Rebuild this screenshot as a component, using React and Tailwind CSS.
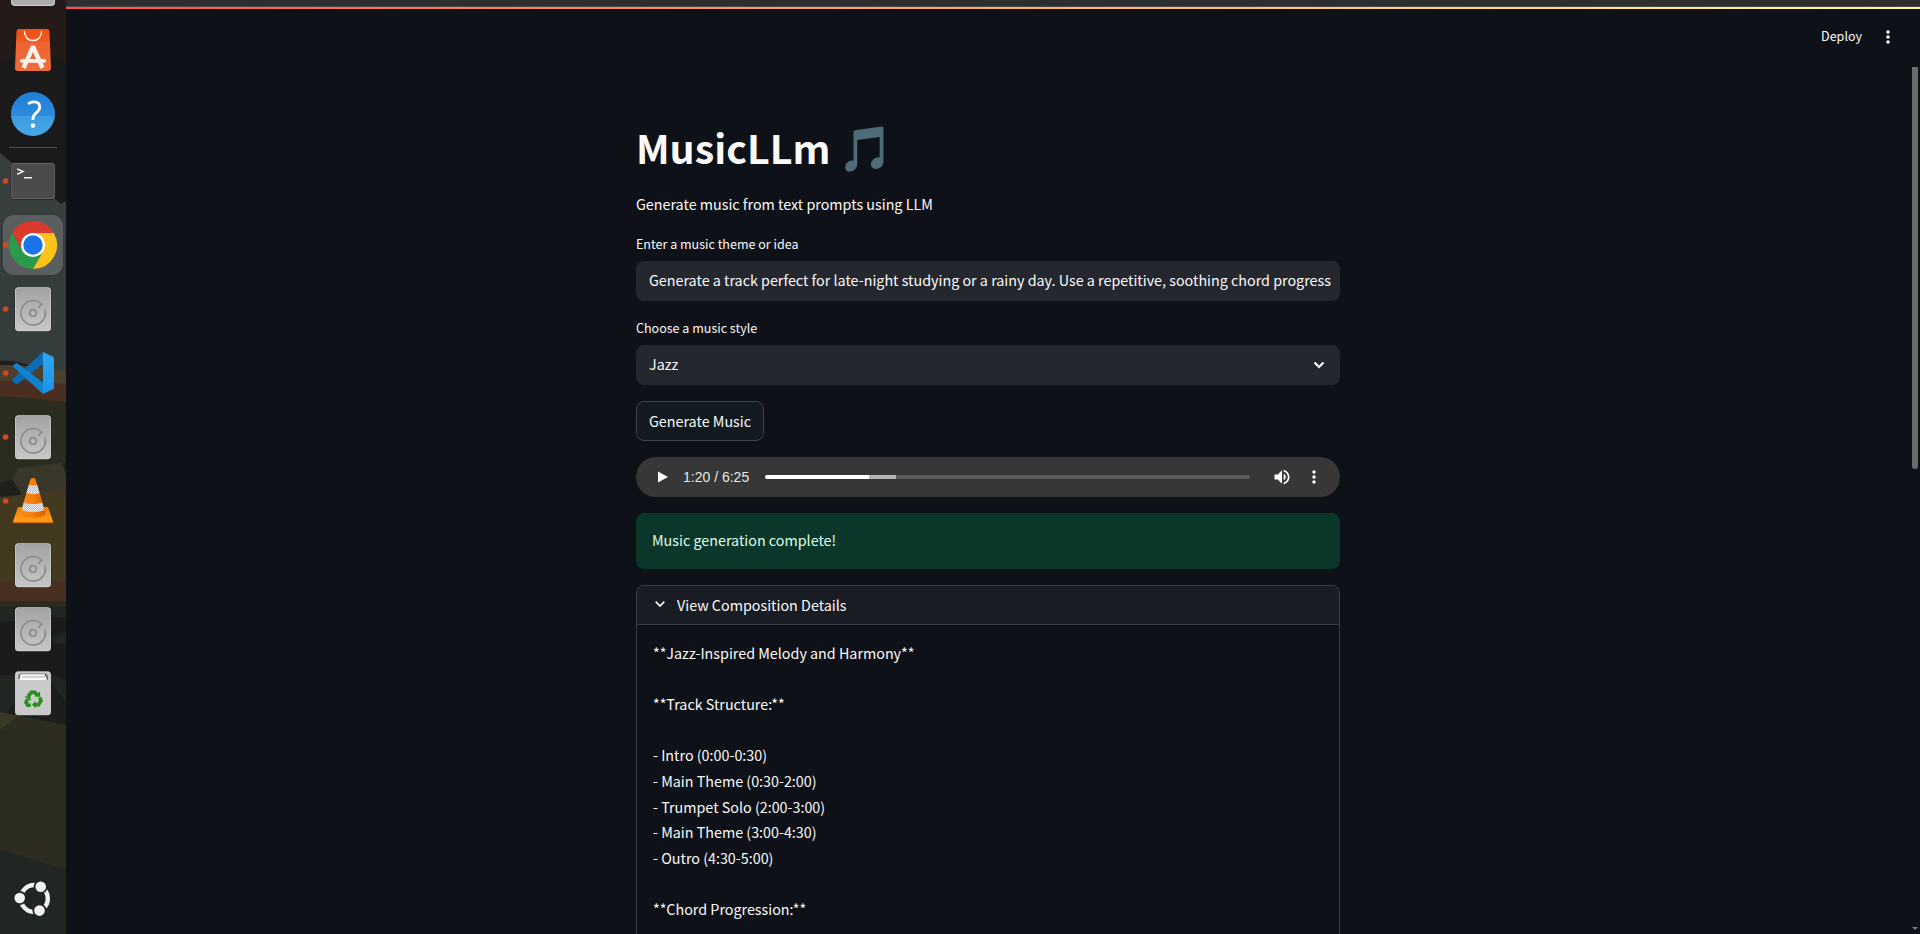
import React from "react";

function Slot({ running, children }) {
  return (
    <svg className="block h-16 w-[66px] shrink-0" viewBox="0 0 66 64" fill="none">
      {children}
      {running && <circle cx="5.6" cy="32" r="2.8" fill="#d9481c" />}
    </svg>
  );
}

function Disk({ running }) {
  return (
    <Slot running={running}>
      <rect x="14.6" y="10.6" width="36.8" height="44.4" rx="4" fill="#161616" opacity=".6" />
      <rect x="15" y="10.3" width="36" height="44" rx="3.6" fill="#d2d2d2" />
      <rect x="15.6" y="11" width="34.8" height="42.2" rx="3" fill="url(#disk)" />
      <path d="M40.6 26.2A12.2 12.2 0 1 0 44.9 32.6" stroke="#868686" strokeWidth="1.5" />
      <path d="M38.3 30.8l3.2-3.4M40.9 26.4l1.6 1.3" stroke="#868686" strokeWidth="1.5" />
      <circle cx="33" cy="36" r="3.3" stroke="#868686" strokeWidth="1.6" />
    </Slot>
  );
}

function Wallpaper() {
  return (
    <svg className="absolute inset-0 h-full w-full" viewBox="0 0 66 934" preserveAspectRatio="none">
      <rect width="66" height="934" fill="#1a1a1b" />
      <path d="M0 0H66V64Q33 38 0 64Z" fill="#241a18" />
      <path d="M0 153L61 204L66 201V380H0Z" fill="#383f3f" />
      <path d="M0 218L66 240V380H0Z" fill="#353c3c" />
      <path d="M0 361Q18 360 30 366L66 374V392H0Z" fill="#1e1d1b" />
      <path d="M0 365Q20 364 66 371V392H0Z" fill="#4a402d" />
      <path d="M0 381Q30 378 66 385V402H0Z" fill="#4a2e20" />
      <path d="M0 396Q30 398 66 402V470L0 484Z" fill="#2a2c20" />
      <path d="M0 483L66 463V500H0Z" fill="#1c1f1c" />
      <path d="M12 479L18 468L62 463L66 474V495H22Z" fill="#38372a" />
      <path d="M0 497Q30 494 66 489V584H0Z" fill="#433920" />
      <path d="M0 581H66V602H0Z" fill="#472f22" />
      <path d="M0 601H66V607H0Z" fill="#32291f" />
      <path d="M0 606H66V690H0Z" fill="#202622" />
      <path d="M0 622L66 617V632L48 640L66 645V682L0 675Z" fill="#1b1b1d" />
      <path d="M0 680Q30 662 66 681V740H0Z" fill="#202622" />
      <path d="M6 713L22 695L48 678L66 702V728Z" fill="#1b1e1c" />
      <path d="M0 712L66 725V871L0 850Z" fill="#2c2c20" />
      <path d="M0 712L18 716L0 730Z" fill="#3a3826" />
      <path d="M0 849L66 870V934H0Z" fill="#202622" />
    </svg>
  );
}

function Dock() {
  return (
    <aside className="relative w-[66px] shrink-0 overflow-hidden">
      <Wallpaper />
      <div className="relative flex h-full flex-col">
        <svg className="block h-[18px] w-[66px] shrink-0" viewBox="0 0 66 18">
          <defs>
            <linearGradient id="disk" x1="0" y1="0" x2="0" y2="1">
              <stop offset="0" stopColor="#a3a3a3" />
              <stop offset="1" stopColor="#c6c6c6" />
            </linearGradient>
            <linearGradient id="cone" x1="0" y1="0" x2="1" y2="0">
              <stop offset="0" stopColor="#f48b1a" />
              <stop offset=".5" stopColor="#f77d08" />
              <stop offset="1" stopColor="#d95f06" />
            </linearGradient>
            <linearGradient id="base" x1="0" y1="0" x2="0" y2="1">
              <stop offset="0" stopColor="#f57900" />
              <stop offset="1" stopColor="#ffa51c" />
            </linearGradient>
            <linearGradient id="help" x1="0" y1="0" x2="0" y2="1">
              <stop offset="0" stopColor="#1e7fd6" />
              <stop offset=".54" stopColor="#2c8cdd" />
              <stop offset=".55" stopColor="#3d9ce2" />
              <stop offset="1" stopColor="#45a8e8" />
            </linearGradient>
            <linearGradient id="bag" x1="0" y1="0" x2="0" y2="1">
              <stop offset="0" stopColor="#f04f17" />
              <stop offset=".3" stopColor="#ee5a20" />
              <stop offset=".31" stopColor="#ef6330" />
              <stop offset="1" stopColor="#ee6c3a" />
            </linearGradient>
            <linearGradient id="code" x1="0" y1="0" x2="0" y2="1">
              <stop offset="0" stopColor="#2fa7f2" />
              <stop offset="1" stopColor="#1b93e6" />
            </linearGradient>
            <pattern id="mesh" width="2" height="2" patternUnits="userSpaceOnUse">
              <rect width="2" height="2" fill="#eceff2" />
              <rect width="1" height="1" fill="#a9b6c1" />
              <rect x="1" y="1" width="1" height="1" fill="#b7c2cb" />
            </pattern>
          </defs>
          <path d="M11 0H55V2Q55 6 51 6H15Q11 6 11 2Z" fill="#cfcfcf" />
          <path d="M12 0H54V1.6Q54 5 50.6 5H15.4Q12 5 12 1.6Z" fill="#adadad" />
        </svg>

        <Slot>
          <path d="M19 11H47Q49.4 11 49.5 13.4L51 50Q51 53 48 53H18Q15 53 15 50L16.5 13.4Q16.6 11 19 11Z" fill="url(#bag)" />
          <path d="M24.5 13.5C24.5 19 28 22.6 33 22.6S41.500 19 41.500 13.500" stroke="#fbe9e2" strokeWidth="1.5" strokeLinecap="round" />
          <path d="M23.500 50L33 28.500L42.500 50" stroke="#fdf1ec" strokeWidth="4.400" strokeLinejoin="bevel" />
          <rect x="20" y="41" width="26" height="3.800" rx="1.800" fill="#fdf1ec" />
        </Slot>

        <Slot>
          <circle cx="33" cy="32" r="22" fill="url(#help)" />
          <path d="M28 21.800C30 20.400 32 19.800 34 19.800C37.600 19.800 39.800 21.800 39.800 25C39.800 30.600 32.900 30.600 32.900 36.800V38" stroke="#fff" strokeWidth="2.800" />
          <circle cx="33" cy="43.600" r="2.300" fill="#fff" />
        </Slot>

        <div className="flex h-[3px] w-[66px] shrink-0 items-center justify-center">
          <div className="h-px w-12 bg-[#4d4d4d]" />
        </div>

        <Slot running>
          <rect x="10.600" y="13.600" width="44.800" height="37.200" rx="4" fill="#222" />
          <rect x="11" y="14" width="44" height="36" rx="3.500" fill="#666" />
          <rect x="11.600" y="15" width="42.800" height="34" rx="3" fill="#4b4b4b" />
          <path d="M17.200 20L23 22.600L17.200 25.300M24 28.700H32" stroke="#f2f2f2" strokeWidth="1.500" />
        </Slot>

        <Slot running>
          <rect x="3" y="2" width="60" height="60" rx="11" fill="#5a5e5e" />
          <path d="M33 32V20H53.800A24 24 0 0 0 12.200 20L22.600 38Z" fill="#dc3a2c" />
          <path d="M33 32L22.600 38L12.200 20A24 24 0 0 0 33 56L43.400 38Z" fill="#2b9a4a" />
          <path d="M33 32L43.400 38L33 56A24 24 0 0 0 53.800 20H33Z" fill="#fcc31a" />
          <circle cx="33" cy="32" r="12" fill="#fff" />
          <circle cx="33" cy="32" r="9.700" fill="#1a73e8" />
        </Slot>

        <Disk running />

        <Slot running>
          <path d="M43 11L43 23L17.500 43Q16.500 43.600 15.500 43L12.600 40.400Q11.500 39.300 12.600 38.200Z" fill="#0b6cb5" />
          <path d="M12.600 25.200L15.500 22.400Q16.500 21.600 17.600 22.400L43 41.500V53Z" fill="#0f83d0" />
          <path d="M43 11L52.800 15.800Q54 16.400 54 17.700V46.400Q54 47.700 52.800 48.300L43 53Z" fill="url(#code)" />
        </Slot>

        <Disk running />

        <Slot running>
          <path d="M18 38H48L53 52.500V54H13V52.500Z" fill="url(#base)" />
          <path d="M13 52.700H53V54H13Z" fill="#e56a00" />
          <path d="M30.500 10Q33 8.200 35.500 10L45.500 44Q45.500 48.600 33 48.600T20.500 44Z" fill="url(#cone)" />
          <path d="M28.900 15.800Q33 17.200 37.100 15.800L39.600 24Q33 26.400 26.400 24Z" fill="url(#mesh)" />
          <path d="M23.900 33.500Q33 36.500 42.100 33.500L44.300 41Q33 45.500 21.700 41Z" fill="url(#mesh)" />
        </Slot>

        <Disk />
        <Disk />

        <Slot>
          <rect x="15" y="10.300" width="36" height="44" rx="3.600" fill="#c6c6c6" />
          <rect x="15.600" y="11" width="34.800" height="42.200" rx="3" fill="#cacaca" />
          <path d="M18 17Q18 12.500 21 12.500H45Q48 12.500 48 17V19H46L45 15H21L20 19Z" fill="#6d6d6d" />
          <path d="M20.500 13.200H44.500L47 19H19.500Z" fill="#fff" />
          <path d="M21 15.200H45M22 17L45 16" stroke="#b3b3b3" strokeWidth=".7" />
          <g stroke="#26901b" strokeWidth="3.600" fill="none">
            <path d="M28.200 35.500L31.200 31.400H35L37 34" />
            <path d="M39.600 36.500L41 39.500L38.600 43.700H35" />
            <path d="M30.800 44.200H27.800L26 41.300L27.600 38" />
          </g>
          <path d="M34.400 35.400L40.200 36L40 30.600ZM35.800 40V47.300L31.900 43.800ZM24.200 35.600L30 34.900L31.200 40Z" fill="#26901b" />
        </Slot>

        <svg className="mt-auto mb-1 block h-16 w-[66px] shrink-0" viewBox="0 0 66 64" fill="none">
          <circle cx="34.300" cy="32.500" r="13.500" stroke="#f2f2f2" strokeWidth="4.400" />
          <g fill="#f2f2f2" stroke="#202622" strokeWidth="1.800">
            <circle cx="40.700" cy="20.800" r="6.200" />
            <circle cx="19.700" cy="32" r="6.200" />
            <circle cx="39.500" cy="44.600" r="6.200" />
          </g>
        </svg>
      </div>
    </aside>
  );
}

function Notes() {
  return (
    <svg className="h-[46px] w-[39px]" viewBox="0 0 39 46" fill="#4e6c78">
      <path d="M8.500 5.800Q8.500 4.500 10 4.300L37 .4Q38.400 .3 38.400 1.500V36Q38 40 34.600 42Q31 43.800 28.300 42.600Q25.500 41 26 37.500Q27 33 31.500 31.500Q33.500 31 34.700 31.600V11L12.300 14V37.500Q12.300 42 8.500 44.600Q4.500 46.700 1.800 45Q-.5 43.200 .4 39.700Q1.800 35.600 6 34.600Q7.500 34.400 8.500 34.800Z" />
    </svg>
  );
}

const details = [
  "**Jazz-Inspired Melody and Harmony**",
  "",
  "**Track Structure:**",
  "",
  "- Intro (0:00-0:30)",
  "- Main Theme (0:30-2:00)",
  "- Trumpet Solo (2:00-3:00)",
  "- Main Theme (3:00-4:30)",
  "- Outro (4:30-5:00)",
  "",
  "**Chord Progression:**",
];

function Player() {
  return (
    <div className="mt-4 flex h-10 items-center rounded-[20px] bg-[#363736] text-white">
      <svg className="ml-[22px] h-3 w-[11px]" viewBox="0 0 11 12" fill="currentColor">
        <path d="M0 .5V11.500L10 6Z" />
      </svg>
      <span className="ml-[14px] w-[82px] font-['Liberation_Sans',sans-serif] text-sm leading-none text-[#e8e8e8]">1:20 / 6:25</span>
      <div className="flex h-1 w-[485px] overflow-hidden rounded-full bg-[#5b5c5c]">
        <div className="w-[104px] bg-white" />
        <div className="w-[27px] bg-[#b4b5b5]" />
      </div>
      <svg className="ml-[22px] h-5 w-5" viewBox="0 0 24 24" fill="currentColor">
        <path d="M3 9v6h4l5 5V4L7 9H3zm13.500 3c0-1.770-1.020-3.290-2.500-4.030v8.050c1.480-.73 2.500-2.250 2.500-4.020zM14 3.230v2.060c2.890.86 5 3.540 5 6.710s-2.110 5.850-5 6.710v2.060c4.010-.91 7-4.490 7-8.770s-2.990-7.860-7-8.770z" />
      </svg>
      <svg className="ml-3 h-5 w-5" viewBox="0 0 24 24" fill="currentColor">
        <path d="M12 8c1.100 0 2-.9 2-2s-.9-2-2-2-2 .9-2 2 .9 2 2 2zm0 2c-1.100 0-2 .9-2 2s.9 2 2 2 2-.9 2-2-.9-2-2-2zm0 6c-1.100 0-2 .9-2 2s.9 2 2 2 2-.9 2-2-.9-2-2-2z" />
      </svg>
    </div>
  );
}

export default function App() {
  return (
    <div className="flex h-[934px] w-[1920px] overflow-hidden bg-[#0e1117] font-['Noto_Sans_CJK_JP','Noto_Sans_CJK_SC',sans-serif] text-[14.320px] text-[#fafafa]">
      <Dock />
      <div className="flex min-w-0 flex-1 flex-col">
        <div className="h-1.5 shrink-0 bg-[#2e2e2e]" />
        <div className="h-px shrink-0 bg-[#484848]" />
        <div className="h-0.5 shrink-0 bg-linear-to-r from-[#ff4b4b] to-[#fffd80]" />
        <div className="flex min-h-0 flex-1">
          <div className="flex min-w-0 flex-1 flex-col">
            <header className="flex h-14 shrink-0 items-center justify-end pr-3">
              <span className="pb-0.5 text-[12.530px] leading-5">Deploy</span>
              <svg className="ml-4 h-5 w-5" viewBox="0 0 20 20" fill="currentColor">
                <circle cx="10" cy="5" r="1.800" />
                <circle cx="10" cy="10" r="1.800" />
                <circle cx="10" cy="15" r="1.800" />
              </svg>
            </header>
            <main className="mx-auto flex min-h-0 w-[704px] flex-1 flex-col">
              <div className="mt-[58px] flex h-[53px] shrink-0 items-start">
                <h1 className="-mt-[3px] text-[39.400px] leading-[53px] font-bold">MusicLLm</h1>
                <span className="mt-[3px] ml-[15px]"><Notes /></span>
              </div>
              <p className="mt-[15px] h-[26px] shrink-0 leading-[26px]">Generate music from text prompts using LLM</p>
              <label className="mt-[17px] h-5 shrink-0 text-[12.530px] leading-5">Enter a music theme or idea</label>
              <div className="mt-[7px] flex h-10 shrink-0 items-center overflow-hidden rounded-lg bg-[#25272f] px-[13px] pb-0.5 whitespace-nowrap">
                Generate a track perfect for late-night studying or a rainy day. Use a repetitive, soothing chord progress
              </div>
              <label className="mt-[17px] h-5 shrink-0 text-[12.530px] leading-5">Choose a music style</label>
              <div className="mt-[7px] flex h-10 shrink-0 items-center justify-between rounded-lg bg-[#25272f] pr-[15px] pl-[13px]">
                <span className="pb-0.5">Jazz</span>
                <svg className="h-3 w-3" viewBox="0 0 12 12" fill="none" stroke="currentColor" strokeWidth="2.200">
                  <path d="M1.500 3.500L6 8L10.500 3.500" />
                </svg>
              </div>
              <button className="mt-4 flex h-10 w-32 shrink-0 items-center justify-center rounded-lg border border-[#41444c] bg-[#12191f] whitespace-nowrap">
                Generate Music
              </button>
              <Player />
              <div className="mt-4 flex h-14 shrink-0 items-center rounded-lg bg-[#0b372b] px-4 pb-0.5 text-[#dffde9]">
                Music generation complete!
              </div>
              <section className="mt-4 flex min-h-0 flex-1 flex-col overflow-hidden rounded-t-lg border border-b-0 border-[#3b3d44]">
                <div className="flex h-[39px] shrink-0 items-center border-b border-[#3b3d44] bg-[#1a1c24] pl-[17px]">
                  <svg className="mb-0.5 h-3 w-3" viewBox="0 0 12 12" fill="none" stroke="currentColor" strokeWidth="1.700">
                    <path d="M1.700 3.700L6 8L10.300 3.700" />
                  </svg>
                  <span className="ml-[11px]">View Composition Details</span>
                </div>
                <div className="px-4 pt-[15px]">
                  {details.map((line, i) => (
                    <p key={i} className="h-[25.600px] leading-[25.600px] whitespace-nowrap">{line}</p>
                  ))}
                </div>
              </section>
            </main>
          </div>
          <div className="flex w-2.5 shrink-0 flex-col items-center pt-[58px]">
            <div className="h-[402px] w-1.5 rounded-b-full bg-[#6b6c70]" />
            <svg className="mt-auto mb-1 h-[3px] w-1.5" viewBox="0 0 6 3" fill="#7b7c80">
              <path d="M0 0H6L3 3Z" />
            </svg>
          </div>
        </div>
      </div>
    </div>
  );
}
